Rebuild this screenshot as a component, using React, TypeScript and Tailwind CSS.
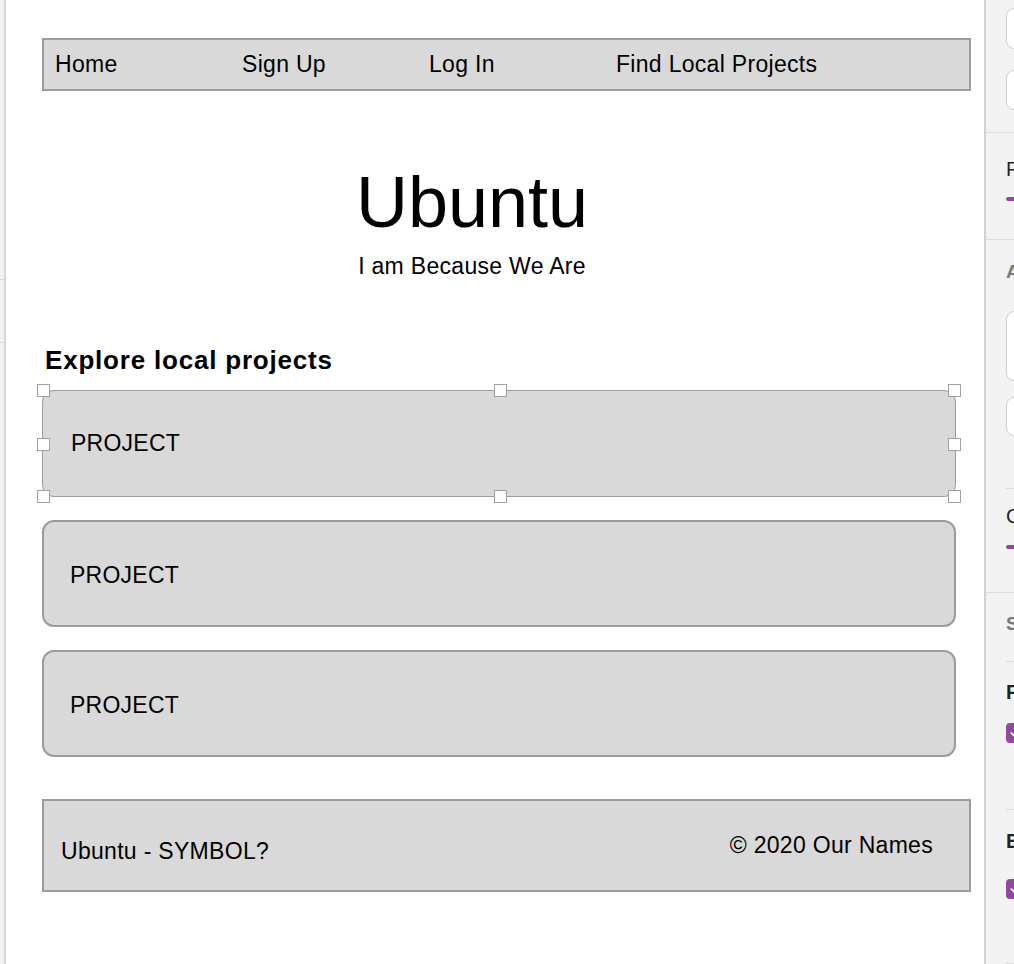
import { Check } from 'lucide-react';

const navItems = ['Home', 'Sign Up', 'Log In', 'Find Local Projects'];

// selection handles around the active card (left/top offsets in px)
const handles = [
  'left-[-6px] top-[-7px]',
  'left-[451px] top-[-7px]',
  'right-[-6px] top-[-7px]',
  'left-[-6px] top-[47px]',
  'right-[-6px] top-[47px]',
  'left-[-6px] bottom-[-7px]',
  'left-[451px] bottom-[-7px]',
  'right-[-6px] bottom-[-7px]',
];

function ProjectCard({ selected }: { selected?: boolean }) {
  return (
    <div
      className={`relative w-[914px] h-[107px] rounded-[12px] bg-[#d9d9d9] flex items-center ${
        selected ? 'border border-[#9c9c9c] pl-[28px]' : 'border-2 border-[#9c9c9c] pl-[26px]'
      }`}
    >
      <span className={`text-[23px] tracking-[0.25px] text-black leading-none ${selected ? '' : 'mt-[4px]'}`}>
        PROJECT
      </span>
      {selected &&
        handles.map((pos) => (
          <div
            key={pos}
            className={`absolute ${pos} w-[13px] h-[13px] bg-white border border-[#a0a0a0]`}
          />
        ))}
    </div>
  );
}

function PanelBox({ h }: { h: string }) {
  return <div className={`ml-[20px] w-[60px] ${h} bg-white border border-[#cfcfcf] rounded-[8px] shrink-0`} />;
}

function Slider() {
  return <div className="ml-[20px] w-[60px] h-[4px] rounded-l-full bg-[#8f4a9c] shrink-0" />;
}

function PurpleCheck() {
  return (
    <div className="ml-[20px] w-[20px] h-[20px] rounded-[4px] bg-[#8f4a9c] flex items-center justify-center shrink-0">
      <Check className="w-[14px] h-[14px] text-white" strokeWidth={3} />
    </div>
  );
}

function SidePanel() {
  return (
    <aside className="w-[30px] h-full border-l-2 border-[#d2d2d2] bg-[#f2f2f2] overflow-hidden flex flex-col font-['Liberation_Sans',sans-serif]">
      <div className="mt-[8px]" />
      <PanelBox h="h-[41px]" />
      <div className="mt-[21px]" />
      <PanelBox h="h-[40px]" />
      <div className="mt-[22px] h-px bg-[#dcdcdc] shrink-0" />
      <div className="mt-[26px] ml-[20px] text-[20px] leading-none text-[#222] whitespace-nowrap">Font size</div>
      <div className="mt-[18px]" />
      <Slider />
      <div className="mt-[38px] h-px bg-[#dcdcdc] shrink-0" />
      <div className="mt-[22px] ml-[20px] text-[19px] leading-none font-bold text-[#7a7a7a] whitespace-nowrap">Appearance</div>
      <div className="mt-[30px]" />
      <PanelBox h="h-[70px]" />
      <div className="mt-[16px]" />
      <PanelBox h="h-[39px]" />
      <div className="mt-[52px] ml-[20px] h-px bg-[#dcdcdc] shrink-0" />
      <div className="mt-[17px] ml-[20px] text-[20px] leading-none text-[#222] whitespace-nowrap">Corner radius</div>
      <div className="mt-[19px]" />
      <Slider />
      <div className="mt-[43px] h-px bg-[#dcdcdc] shrink-0" />
      <div className="mt-[21px] ml-[20px] text-[19px] leading-none font-bold text-[#7a7a7a] whitespace-nowrap">Style</div>
      <div className="mt-[28px] ml-[20px] h-px bg-[#dcdcdc] shrink-0" />
      <div className="mt-[20px] ml-[20px] text-[20px] leading-none font-bold text-[#222] whitespace-nowrap">Fill</div>
      <div className="mt-[21px]" />
      <PurpleCheck />
      <div className="mt-[66px] ml-[20px] h-px bg-[#dcdcdc] shrink-0" />
      <div className="mt-[21px] ml-[20px] text-[20px] leading-none font-bold text-[#222] whitespace-nowrap">Border</div>
      <div className="mt-[28px]" />
      <PurpleCheck />
      <div className="mt-[64px] ml-[20px] h-px bg-[#dcdcdc] shrink-0" />
    </aside>
  );
}

export default function App() {
  return (
    <div className="w-[1014px] h-[964px] flex overflow-hidden bg-white font-['Liberation_Sans',Arial,sans-serif] text-black">
      {/* Left tool strip */}
      <div className="w-[6px] h-full bg-[#f2f2f2] border-r-2 border-[#d6d6d6] flex flex-col">
        <div className="mt-[279px] h-px bg-[#dadada]" />
        <div className="mt-[62px] h-px bg-[#dadada]" />
      </div>

      {/* Canvas */}
      <main className="flex-1 h-full pl-[36px] pt-[38px]">
        <nav className="w-[929px] h-[53px] border-2 border-[#9c9c9c] bg-[#d9d9d9] flex items-center pl-[11px]">
          {navItems.map((item) => (
            <span key={item} className="w-[187px] shrink-0 whitespace-nowrap text-[23px] tracking-[0.3px] leading-none">
              {item}
            </span>
          ))}
        </nav>

        <div className="w-[860px] mt-[75px] flex flex-col items-center">
          <h1 className="text-[72px] leading-none">Ubuntu</h1>
          <p className="mt-[17px] text-[23px] tracking-[0.3px] leading-none">I am Because We Are</p>
        </div>

        <h2 className="mt-[69px] ml-[3px] text-[26px] font-bold tracking-[0.8px] leading-none">
          Explore local projects
        </h2>

        <div className="mt-[17px] flex flex-col gap-[23px]">
          <ProjectCard selected />
          <ProjectCard />
          <ProjectCard />
        </div>

        <footer className="mt-[42px] w-[929px] h-[93px] border-2 border-[#9c9c9c] bg-[#d9d9d9] flex items-center justify-between pl-[17px] pr-[36px]">
          <span className="mt-[11px] text-[23px] tracking-[0.3px] leading-none">Ubuntu - SYMBOL?</span>
          <span className="text-[23px] tracking-[0.3px] leading-none">© 2020 Our Names</span>
        </footer>
      </main>

      <SidePanel />
    </div>
  );
}
